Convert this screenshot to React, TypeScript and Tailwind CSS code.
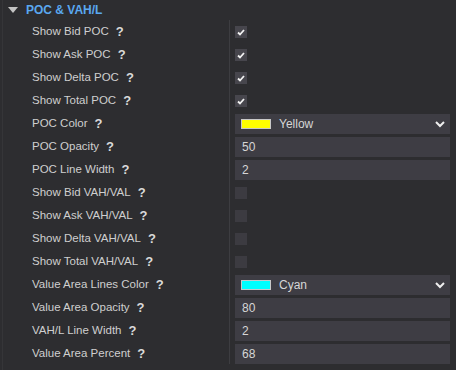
import React from "react";

type Row =
  | { label: string; kind: "check"; checked: boolean }
  | { label: string; kind: "color"; color: string; name: string }
  | { label: string; kind: "input"; value: string };

const rows: Row[] = [
  { label: "Show Bid POC", kind: "check", checked: true },
  { label: "Show Ask POC", kind: "check", checked: true },
  { label: "Show Delta POC", kind: "check", checked: true },
  { label: "Show Total POC", kind: "check", checked: true },
  { label: "POC Color", kind: "color", color: "#ffff00", name: "Yellow" },
  { label: "POC Opacity", kind: "input", value: "50" },
  { label: "POC Line Width", kind: "input", value: "2" },
  { label: "Show Bid VAH/VAL", kind: "check", checked: false },
  { label: "Show Ask VAH/VAL", kind: "check", checked: false },
  { label: "Show Delta VAH/VAL", kind: "check", checked: false },
  { label: "Show Total VAH/VAL", kind: "check", checked: false },
  { label: "Value Area Lines Color", kind: "color", color: "#00ffff", name: "Cyan" },
  { label: "Value Area Opacity", kind: "input", value: "80" },
  { label: "VAH/L Line Width", kind: "input", value: "2" },
  { label: "Value Area Percent", kind: "input", value: "68" },
];

function Check({ checked }: { checked: boolean }) {
  return (
    <div className={`flex h-[12px] w-[12px] items-center justify-center ${checked ? "bg-[#47464d]" : "bg-[#3c3b41]"}`}>
      {checked && (
        <svg width="8" height="7" viewBox="0 0 8 7">
          <path d="M1 3.5 L3 5.5 L7 1" stroke="#f2f2f2" strokeWidth="1.8" fill="none" />
        </svg>
      )}
    </div>
  );
}

function Control({ row }: { row: Row }) {
  if (row.kind === "check") return <Check checked={row.checked} />;
  if (row.kind === "color")
    return (
      <div className="flex h-[20px] w-[215px] items-center bg-[#3e3d44] pl-[6px] pr-[6px]">
        <div className="h-[10px] w-[30px] border border-[#c8c8c8]" style={{ backgroundColor: row.color }} />
        <span className="ml-[8px] flex-1 text-[12px] text-[#d6d6d6]">{row.name}</span>
        <svg width="10" height="7" viewBox="0 0 10 7" className="mr-[-1px]">
          <path d="M1 1 L5 5 L9 1" stroke="#eeeeee" strokeWidth="2" fill="none" />
        </svg>
      </div>
    );
  return (
    <div className="flex h-[20px] w-[215px] items-center bg-[#3e3d44] pl-[7px] text-[12px] text-[#d6d6d6]">
      {row.value}
    </div>
  );
}

export default function App() {
  return (
    <div
      className="relative h-[370px] w-[456px] overflow-hidden bg-[#2d2d30] text-[12px]"
      style={{ fontFamily: '"Liberation Sans", Arial, sans-serif' }}
    >
      <div className="absolute left-[2px] top-0 h-full w-px bg-[#353538]" />
      <div className="flex h-[20px] items-center pl-[8px]">
        <svg width="10" height="6" viewBox="0 0 10 6">
          <path d="M0 0 L10 0 L5 6 Z" fill="#c4c4c4" />
        </svg>
        <span className="ml-[8px] text-[12px] font-bold text-[#5aa8f0]">POC &amp; VAH/L</span>
      </div>
      <div className="flex">
        <div className="flex w-[229px] flex-col gap-[3px] pt-[2px] pl-[32px]">
          {rows.map((r) => (
            <div key={r.label} className="flex h-[20px] items-center text-[11.5px] text-[#cfcfcf]">
              <span>{r.label}</span>
              <span className="ml-[7px] text-[13px] font-bold text-[#dadada]">?</span>
            </div>
          ))}
        </div>
        <div className="w-px self-stretch bg-[#3d3d41]" />
        <div className="flex flex-col gap-[3px] pt-[2px] pl-[5px]">
          {rows.map((r) => (
            <div key={r.label} className="flex h-[20px] items-center">
              <Control row={r} />
            </div>
          ))}
        </div>
      </div>
    </div>
  );
}
